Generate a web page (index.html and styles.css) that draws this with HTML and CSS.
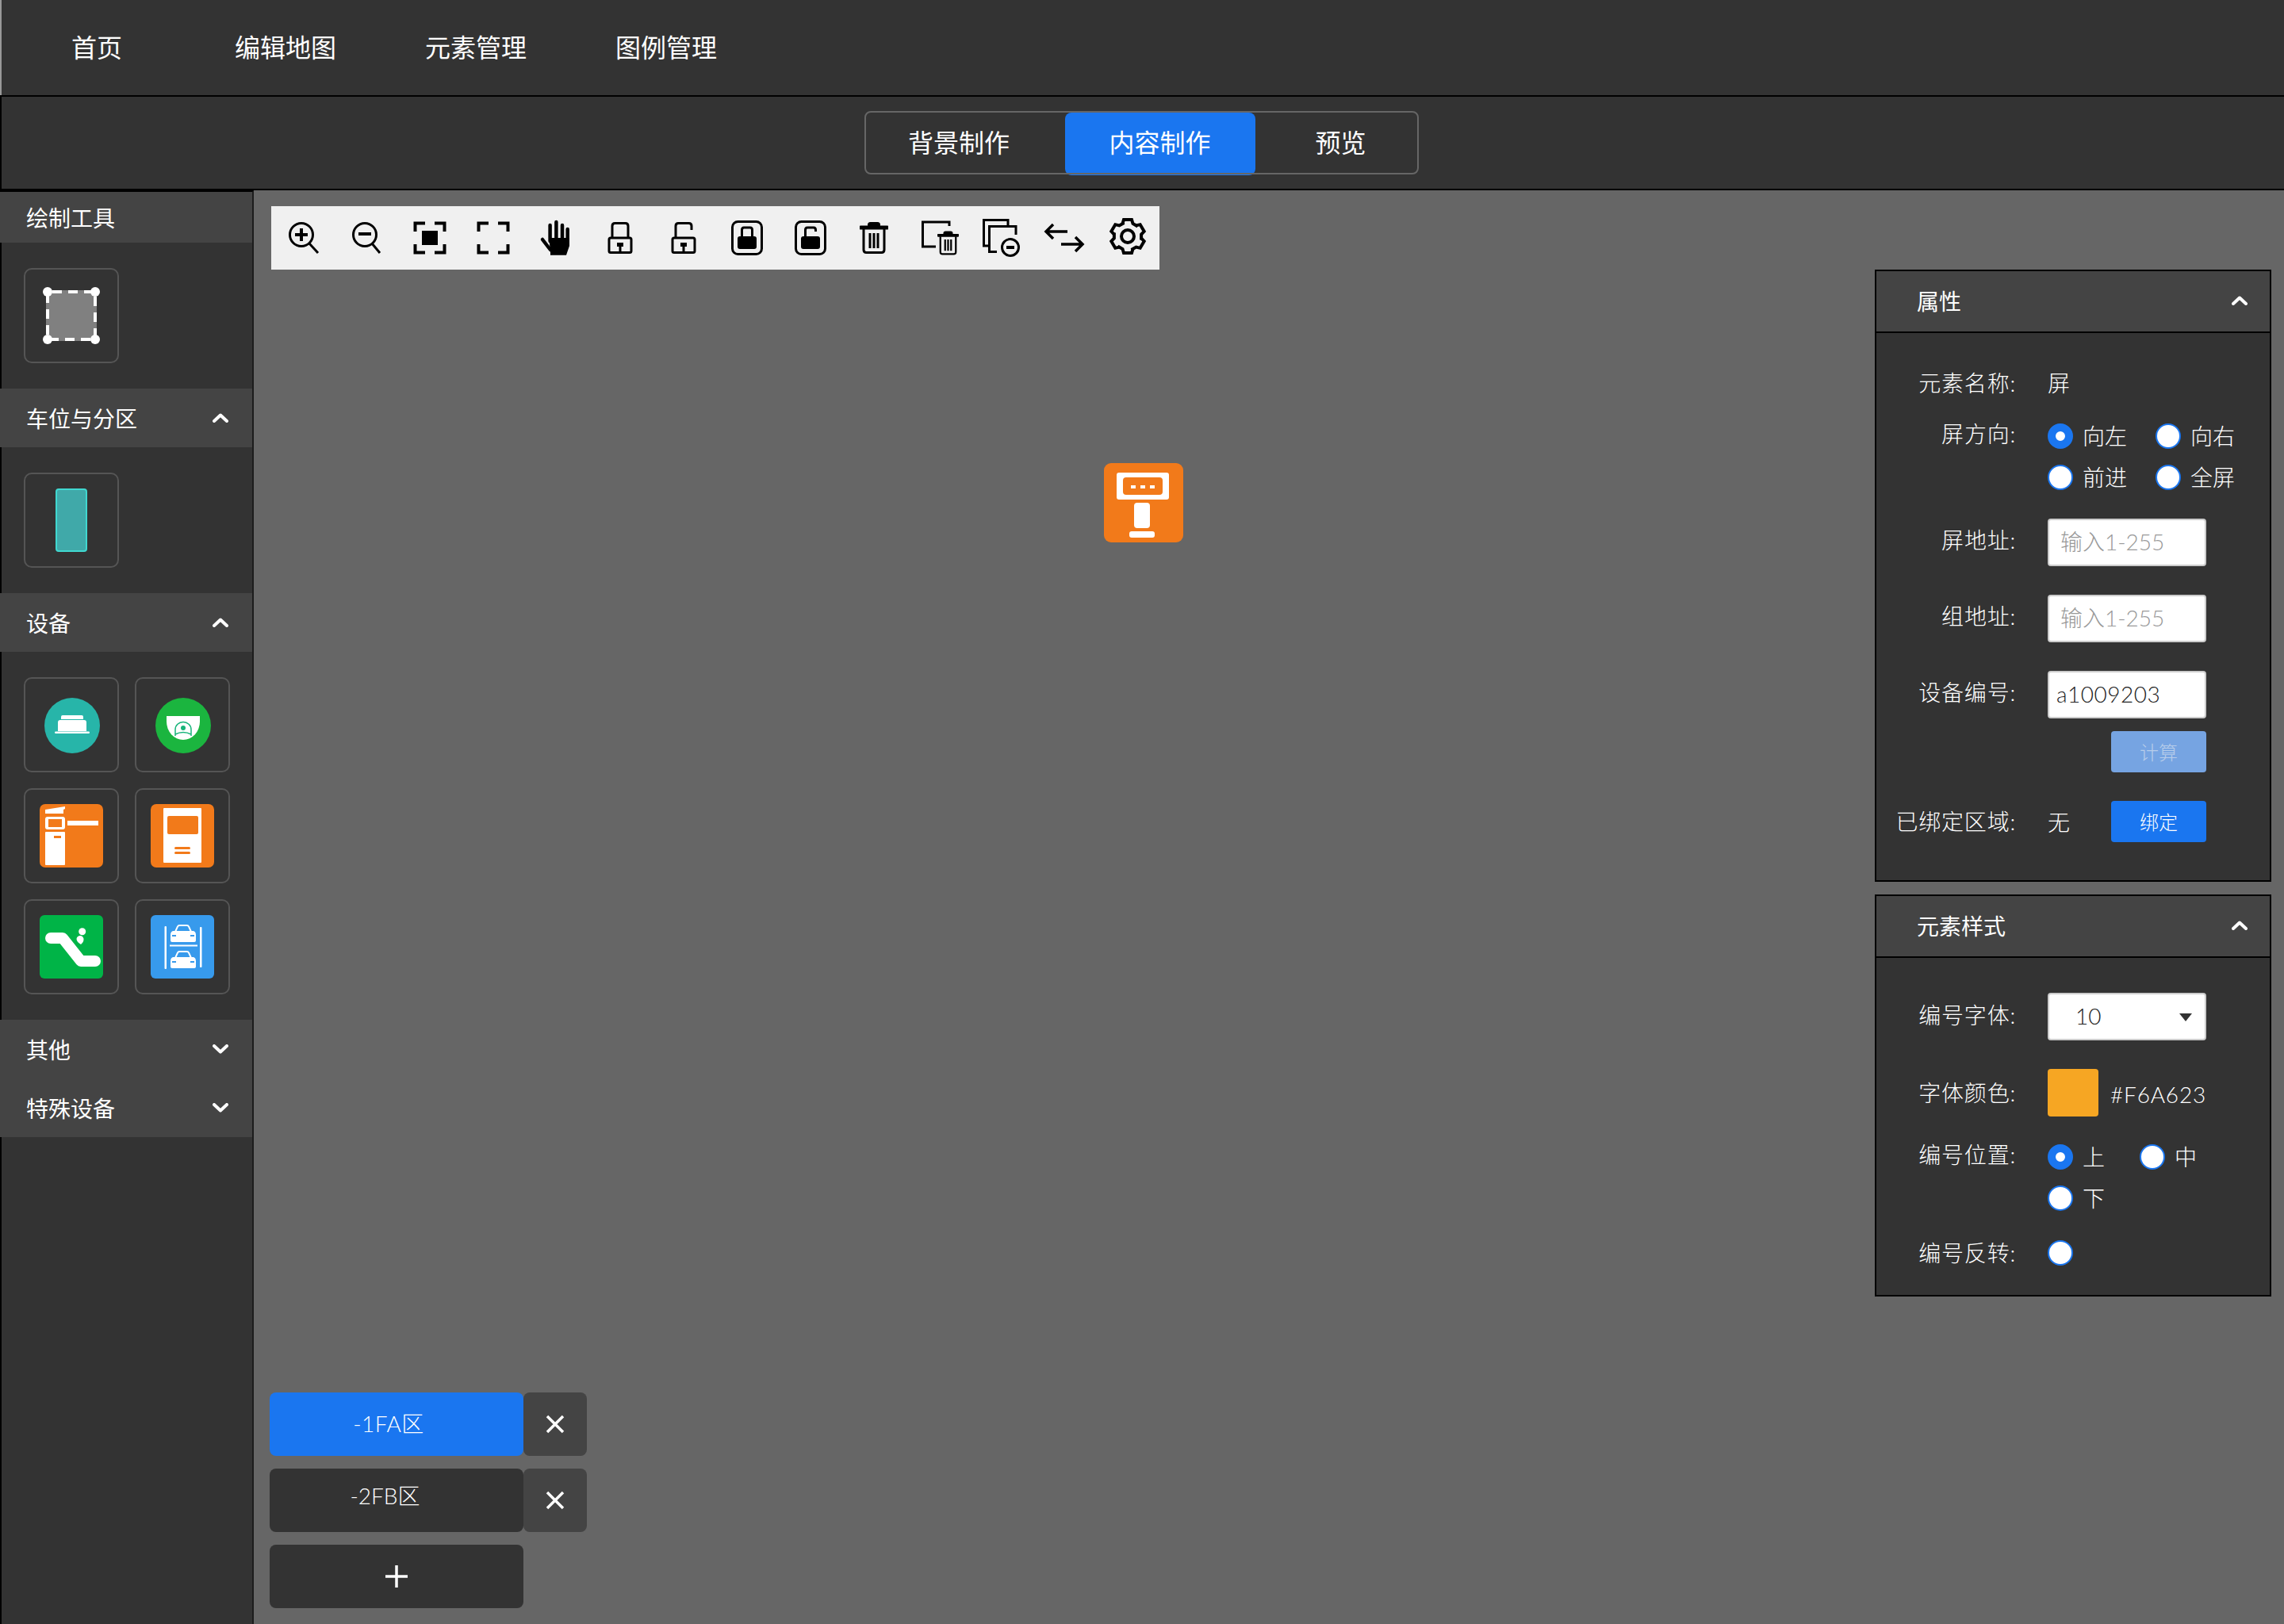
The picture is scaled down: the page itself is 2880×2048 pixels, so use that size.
FILE: index.html
```html
<!DOCTYPE html>
<html lang="zh-CN">
<head>
  <meta charset="UTF-8" />
  <title>编辑地图 - 内容制作</title>
  <link rel="stylesheet" href="styles.css">
</head>
<body>

  <svg class="sprite" xmlns="http://www.w3.org/2000/svg">
    <symbol id="chev-up" viewBox="0 0 20 12">
      <path d="M2 10 10 2.5 18 10" fill="none" stroke="#fff" stroke-width="4" stroke-linecap="round" stroke-linejoin="round"/>
    </symbol>
    <symbol id="chev-down" viewBox="0 0 20 12">
      <path d="M2 2 10 9.5 18 2" fill="none" stroke="#fff" stroke-width="4" stroke-linecap="round" stroke-linejoin="round"/>
    </symbol>
    <symbol id="trash" viewBox="0 0 36 40">
      <rect x="10" y="0" width="16" height="7" rx="3.5"/>
      <path d="M1.5 7H34.5" fill="none" stroke="#000" stroke-width="5" stroke-linecap="round"/>
      <path d="M5 9V35Q5 38.5 8.5 38.5H27.5Q31 38.5 31 35V9M13 14V33M18 14V33M23 14V33" fill="none" stroke="#000" stroke-width="3"/>
    </symbol>
    <symbol id="car" viewBox="0 0 32 22">
      <path d="M6 9 9 2.5Q9.5 1 11.5 1H20.500Q22.500 1 23 2.500L26 9" fill="none" stroke="#fff" stroke-width="2"/>
      <path d="M3 8H29Q32 9 32 13V20Q32 22 30 22H2Q0 22 0 20V13Q0 9 3 8Z" fill="#fff"/>
      <path d="M2 13H7V15H2ZM25 13H30V15H25Z" fill="#379aec"/>
    </symbol>
  </svg>

  <nav class="topnav">
    <a class="topnav-item topnav-home">首页</a>
    <a class="topnav-item">编辑地图</a>
    <a class="topnav-item">元素管理</a>
    <a class="topnav-item">图例管理</a>
  </nav>

  <div class="modebar">
    <div class="mode-tabs">
      <div class="mode-tab mode-tab-first">背景制作</div>
      <div class="mode-tab mode-tab-active">内容制作</div>
      <div class="mode-tab mode-tab-last">预览</div>
    </div>
  </div>

  <div class="workspace">
    <aside class="sidebar">
      <div class="side-head side-head-short">绘制工具</div>
      <div class="side-grid">
        <div class="side-item">
          <svg class="side-icon" viewBox="0 0 80 80">
            <rect x="8" y="8" width="64" height="64" fill="#808080"/>
            <rect x="10" y="10" width="60" height="60" fill="none" stroke="#fff" stroke-width="4" stroke-dasharray="12 8" stroke-dashoffset="-6"/>
            <circle cx="10" cy="10" r="6" fill="#fff"/>
            <circle cx="70" cy="10" r="6" fill="#fff"/>
            <circle cx="10" cy="70" r="6" fill="#fff"/>
            <circle cx="70" cy="70" r="6" fill="#fff"/>
          </svg>
        </div>
      </div>

      <div class="side-head">车位与分区<svg class="chevron"><use href="#chev-up"/></svg></div>
      <div class="side-grid">
        <div class="side-item"><div class="zone-swatch"></div></div>
      </div>

      <div class="side-head">设备<svg class="chevron"><use href="#chev-up"/></svg></div>
      <div class="side-grid">
        <div class="side-item">
          <svg class="side-icon" viewBox="0 0 80 80">
            <circle cx="41" cy="41" r="35" fill="#27b5a9"/>
            <path d="M27 33V30Q27 28 29 28H53Q55 28 55 30V33ZM23 48V37Q23 34 26 34H56Q59 34 59 37V48Z" fill="#fff"/>
            <rect x="19" y="48.500" width="44" height="2.500" rx="1.200" fill="#fff"/>
          </svg>
        </div>
        <div class="side-item">
          <svg class="side-icon" viewBox="0 0 80 80">
            <circle cx="41" cy="41" r="35" fill="#1bb53f"/>
            <path d="M20 29H62V36A21 23 0 0 1 20 36Z" fill="#fff"/>
            <path d="M31 54V46A10 9.500 0 0 1 51 46V54M31 52Q41 47 51 52" fill="none" stroke="#17b47a" stroke-width="1.500"/>
            <circle cx="41" cy="44" r="3" fill="#17b47a"/>
          </svg>
        </div>
        <div class="side-item">
          <svg class="side-icon" viewBox="0 0 80 80">
            <rect width="80" height="80" rx="7" fill="#f27a1a"/>
            <path d="M7 7 32 3V6L30 7V12H7Z" fill="#fff"/>
            <rect x="7" y="16" width="25" height="16" rx="3" fill="#fff"/>
            <rect x="11" y="19" width="17" height="10" fill="#f27a1a"/>
            <rect x="35" y="21" width="39" height="6" fill="#fff"/>
            <rect x="7" y="35" width="25" height="42" rx="1" fill="#fff"/>
            <rect x="18" y="40" width="9" height="3" fill="#f27a1a"/>
          </svg>
        </div>
        <div class="side-item">
          <svg class="side-icon" viewBox="0 0 80 80">
            <rect width="80" height="80" rx="7" fill="#f27a1a"/>
            <rect x="16" y="5" width="48" height="69" rx="1" fill="#fff"/>
            <rect x="21" y="15" width="39" height="23" rx="2" fill="#f27a1a"/>
            <rect x="30" y="54" width="20" height="3" rx="1.500" fill="#f27a1a"/>
            <rect x="30" y="60" width="20" height="3" rx="1.500" fill="#f27a1a"/>
          </svg>
        </div>
        <div class="side-item">
          <svg class="side-icon" viewBox="0 0 80 80">
            <rect width="80" height="80" rx="6" fill="#00b447"/>
            <path d="M14 29H29L52 58H70" fill="none" stroke="#fff" stroke-width="14" stroke-linecap="round" stroke-linejoin="round"/>
            <circle cx="53.700" cy="20.700" r="4.500" fill="#fff"/>
            <path d="M46.500 30A4.500 4.500 0 0 1 55.500 31C55.500 34 53 36 52 37 49 35 46.500 33 46.500 30Z" fill="#fff"/>
          </svg>
        </div>
        <div class="side-item">
          <svg class="side-icon" viewBox="0 0 80 80">
            <rect width="80" height="80" rx="6" fill="#379aec"/>
            <rect x="17.500" y="14" width="2.500" height="54" rx="1" fill="#fff"/>
            <rect x="62" y="15" width="2.500" height="51" rx="1" fill="#fff"/>
            <rect x="24" y="37.500" width="35" height="2" fill="#fff"/>
            <use href="#car" x="25" y="12" width="32" height="22"/>
            <use href="#car" x="25" y="45" width="32" height="22"/>
          </svg>
        </div>
      </div>

      <div class="side-head">其他<svg class="chevron"><use href="#chev-down"/></svg></div>
      <div class="side-head">特殊设备<svg class="chevron"><use href="#chev-down"/></svg></div>
    </aside>

    <main class="canvas">
      <div class="toolbar">
        <svg class="tool" viewBox="0 0 40 40"><circle cx="18" cy="16" r="14.500" class="ln"/><path d="M28 27 39 39" class="ln"/><path d="M10 16H26M18 8V24" class="ln ln-4"/></svg>
        <svg class="tool" viewBox="0 0 40 40"><circle cx="18" cy="16" r="14.500" class="ln"/><path d="M27 27 37 39" class="ln"/><path d="M10 15H26" class="ln ln-4"/></svg>
        <svg class="tool" viewBox="0 0 40 40"><path d="M14 1.500H1.500V12M26 1.500H38.500V12M14 38.500H1.500V28M26 38.500H38.500V28" class="ln ln-4"/><rect x="10" y="11" width="20" height="18"/></svg>
        <svg class="tool" viewBox="0 0 40 40"><path d="M14 1.500H1.500V12M26 1.500H38.500V12M14 38.500H1.500V28M26 38.500H38.500V28" class="ln ln-4"/></svg>
        <svg class="tool" viewBox="0 0 40 40"><path d="M11.600 4V24M19.400 0V22M27 4V22M33.700 9V26M2 22 12 35" class="ln ln-hand"/><path d="M10 20H36V30L32 41.700H12V36Z"/></svg>
        <svg class="tool" viewBox="0 0 40 40"><path d="M10 20V5Q10 1.500 13.500 1.500H26.500Q30 1.500 30 5V20" class="ln"/><rect x="6" y="20" width="28" height="18.500" rx="2" class="ln"/><path d="M16 26H24V31H21.500V37H18.500V31H16Z"/></svg>
        <svg class="tool" viewBox="0 0 40 40"><path d="M10 20V5Q10 1.500 13.500 1.500H26.500Q30 1.500 30 5V10" class="ln"/><rect x="6" y="20" width="28" height="18.500" rx="2" class="ln"/><path d="M16 26H24V31H21.500V37H18.500V31H16Z"/></svg>
        <svg class="tool" viewBox="0 0 40 40"><rect x="1.500" y="-0.500" width="37" height="41" rx="7" class="ln"/><path d="M13.500 19V10Q13.500 7 16 7H24Q26.500 7 26.500 10V19" class="ln"/><rect x="8" y="18" width="24" height="16" rx="3"/></svg>
        <svg class="tool" viewBox="0 0 40 40"><rect x="1.500" y="-0.500" width="37" height="41" rx="7" class="ln"/><path d="M13.500 19V10Q13.500 7 16 7H24Q26.500 7 26.500 10V12" class="ln"/><rect x="8" y="18" width="24" height="16" rx="3"/></svg>
        <svg class="tool" viewBox="0 0 40 40"><use href="#trash" x="2" y="0" width="36" height="40"/></svg>
        <svg class="tool" viewBox="0 0 40 40"><path d="M35 5V0H1.500V31H18" class="ln"/><use href="#trash" x="20" y="11" width="27" height="31"/></svg>
        <svg class="tool" viewBox="0 0 40 40"><path d="M29 5V-2.500H-1.500V30H4" class="ln"/><path d="M39 16V5.500H5.500V37.500H15" class="ln"/><circle cx="32" cy="32" r="10.500" class="ln ln-bg"/><path d="M27 32H37" class="ln ln-4"/></svg>
        <svg class="tool" viewBox="0 0 40 40"><path d="M24 12H-2M6 3-3 12 6 21" class="ln ln-35"/><path d="M16 28H41M34 19 43 28 34 37" class="ln ln-35"/></svg>
        <svg class="tool" viewBox="-20 -18 40 40">
          <circle r="8" class="ln ln-4"/>
          <g class="ln ln-4">
            <path id="gear-tooth" d="M-6.500-16-5-21H5L6.500-16 12.500-12.500"/>
            <use href="#gear-tooth" transform="rotate(60)"/>
            <use href="#gear-tooth" transform="rotate(120)"/>
            <use href="#gear-tooth" transform="rotate(180)"/>
            <use href="#gear-tooth" transform="rotate(240)"/>
            <use href="#gear-tooth" transform="rotate(300)"/>
          </g>
        </svg>
      </div>

      <!-- element dropped on the map -->
      <svg class="map-node" viewBox="0 0 100 100">
        <rect width="100" height="100" rx="9" fill="#f27a1a"/>
        <rect x="16" y="12" width="66" height="34" rx="3" fill="#fff"/>
        <rect x="24" y="18" width="50" height="22" rx="4" fill="#f27a1a"/>
        <path d="M34 28H40V32H34ZM46 28H52V32H46ZM58 28H64V32H58Z" fill="#fff"/>
        <rect x="38" y="50" width="20" height="32" rx="4" fill="#fff"/>
        <rect x="32" y="86" width="32" height="8" rx="3" fill="#fff"/>
      </svg>

      <div class="floors">
        <div class="floor floor-active">-1FA区</div>
        <div class="floor-del"><svg class="cross" viewBox="0 0 24 24"><path d="M2 2 22 22M22 2 2 22"/></svg></div>
        <div class="floor floor-second">-2FB区</div>
        <div class="floor-del"><svg class="cross" viewBox="0 0 24 24"><path d="M2 2 22 22M22 2 2 22"/></svg></div>
        <div class="floor"><svg class="cross" viewBox="0 0 28 28"><path d="M14 0V28M0 14H28"/></svg></div>
      </div>

      <div class="panels">
        <section class="panel">
          <header class="panel-head">属性<svg class="chevron"><use href="#chev-up"/></svg></header>
          <div class="panel-body panel-body-attr">
            <div class="row row-text"><span class="row-label">元素名称:</span><span class="row-value">屏</span></div>
            <div class="row row-radios">
              <span class="row-label">屏方向:</span>
              <div class="radios">
                <label class="radio"><input type="radio" name="dir" checked>向左</label>
                <label class="radio"><input type="radio" name="dir">向右</label>
                <label class="radio"><input type="radio" name="dir">前进</label>
                <label class="radio"><input type="radio" name="dir">全屏</label>
              </div>
            </div>
            <div class="row row-field"><span class="row-label">屏地址:</span><input class="field" placeholder="输入1-255"></div>
            <div class="row row-field"><span class="row-label">组地址:</span><input class="field" placeholder="输入1-255"></div>
            <div class="row row-field"><span class="row-label">设备编号:</span><input class="field field-value" value="a1009203"></div>
            <div class="row row-calc"><button class="btn btn-off">计算</button></div>
            <div class="row row-bound"><span class="row-label">已绑定区域:</span><span class="row-value">无</span><button class="btn">绑定</button></div>
          </div>
        </section>

        <section class="panel">
          <header class="panel-head">元素样式<svg class="chevron"><use href="#chev-up"/></svg></header>
          <div class="panel-body panel-body-style">
            <div class="row row-select"><span class="row-label">编号字体:</span><div class="select">10<span class="select-arrow"></span></div></div>
            <div class="row row-color"><span class="row-label">字体颜色:</span><span class="swatch"></span><span class="color-code">#F6A623</span></div>
            <div class="row row-radios row-pos">
              <span class="row-label">编号位置:</span>
              <div class="radios radios-narrow">
                <label class="radio"><input type="radio" name="pos" checked>上</label>
                <label class="radio"><input type="radio" name="pos">中</label>
                <label class="radio"><input type="radio" name="pos">下</label>
              </div>
            </div>
            <div class="row row-flip"><span class="row-label">编号反转:</span><label class="radio"><input type="radio" name="flip"></label></div>
          </div>
        </section>
      </div>
    </main>
  </div>

</body>
</html>
```

FILE: styles.css
```css
* {
  box-sizing: border-box;
}

html, body {
  height: 100%;
}

body {
  margin: 0;
  display: flex;
  flex-direction: column;
  height: 100vh;
  overflow: hidden;
  background-color: #666;
  color: #fff;
  font-family: "Lato", "Noto Sans CJK SC", sans-serif;
  font-size: 28px;
  font-weight: 300;
}

.sprite {
  display: none;
}

svg {
  overflow: visible;
  flex: none;
}

/* top bars */
.topnav {
  display: flex;
  height: 122px;
  padding-left: 2px;
  background-color: #333;
  border-bottom: 2px solid #000;
  box-shadow: inset 2px 0 0 #999;
  font-weight: 400;
}

.topnav-item {
  width: 240px;
  line-height: 120px;
  text-align: center;
  font-size: 32px;
}

.topnav-home {
  width: 238px;
  padding-left: 2px;
}

.modebar {
  display: flex;
  justify-content: center;
  height: 118px;
  padding: 18px 4px 0 0;
  background-color: #333;
  border-bottom: 2px solid #000;
  border-left: 2px solid #000;
  font-weight: 400;
}

.mode-tabs {
  position: relative;
  display: flex;
  height: 80px;
  padding: 2px;
  font-size: 32px;
}

.mode-tabs::after {
  content: "";
  position: absolute;
  inset: 0;
  border: 2px solid #666;
  border-radius: 8px;
}

.mode-tab {
  line-height: 76px;
  text-align: center;
}

.mode-tab-first {
  width: 251px;
  padding-right: 16px;
}

.mode-tab-active {
  width: 240px;
  height: 79px;
  border-radius: 8px;
  background-color: #1a76f0;
}

.mode-tab-last {
  width: 204px;
  padding-left: 12px;
}

/* left column */
.workspace {
  flex: 1;
  display: flex;
  min-height: 0;
}

.sidebar {
  width: 320px;
  flex: none;
  background-color: #333;
  border-top: 2px solid #000;
  border-right: 2px solid #1c1c1c;
  box-shadow: inset 2px 0 0 #000;
}

.side-head {
  display: flex;
  align-items: center;
  justify-content: space-between;
  height: 74px;
  padding: 0 30px 0 33px;
  background-color: #444;
  font-weight: 400;
}

.side-head-short {
  height: 64px;
}

.chevron {
  width: 20px;
  height: 12px;
}

.side-grid {
  display: grid;
  grid-template-columns: 120px 120px;
  gap: 20px;
  padding: 32px 30px;
}

.side-item {
  display: flex;
  align-items: center;
  justify-content: center;
  width: 120px;
  height: 120px;
  border: 2px solid #555;
  border-radius: 10px;
}

.side-icon {
  width: 80px;
  height: 80px;
}

.zone-swatch {
  width: 40px;
  height: 80px;
  background-color: #40a9a9;
  border: 2px solid #40d8d0;
  border-radius: 4px;
}

/* map area */
.canvas {
  position: relative;
  flex: 1;
  background-color: #666;
}

.toolbar {
  display: flex;
  gap: 40px;
  width: 1120px;
  height: 80px;
  margin: 20px 0 0 22px;
  padding: 20px;
  background-color: #f0f0f0;
}

.tool {
  width: 40px;
  height: 40px;
}

.ln {
  fill: none;
  stroke: #000;
  stroke-width: 3;
}

.ln-4 {
  stroke-width: 4;
}

.ln-35 {
  stroke-width: 3.5;
}

.ln-hand {
  stroke-width: 4.5;
  stroke-linecap: round;
}

.ln-bg {
  fill: #f0f0f0;
}

.map-node {
  position: absolute;
  left: 1072px;
  top: 344px;
  width: 100px;
  height: 100px;
}

/* floor switcher */
.floors {
  position: absolute;
  left: 20px;
  bottom: 20px;
  display: grid;
  grid-template-columns: 320px 80px;
  row-gap: 16px;
}

.floor {
  display: flex;
  align-items: center;
  justify-content: center;
  height: 80px;
  border-radius: 8px;
  background-color: #333;
}

.floor-active {
  padding: 0 20px 4px 0;
  background-color: #1a76f0;
  letter-spacing: 0.5px;
}

.floor-second {
  padding: 0 29px 14px 0;
}

.floor-del {
  display: flex;
  align-items: center;
  justify-content: center;
  height: 80px;
  border-radius: 8px;
  background-color: #444;
}

.cross {
  fill: none;
  stroke: #fff;
  stroke-width: 3.5;
}

.floor-del .cross {
  width: 24px;
  height: 24px;
}

.floor .cross {
  width: 28px;
  height: 28px;
}

/* right panels */
.panels {
  position: absolute;
  top: 100px;
  right: 16px;
  display: flex;
  flex-direction: column;
  gap: 16px;
  width: 500px;
}

.panel {
  background-color: #333;
  border: 2px solid #000;
}

.panel-head {
  display: flex;
  align-items: center;
  justify-content: space-between;
  height: 78px;
  padding: 0 28px 2px 51px;
  background-color: #444;
  border-bottom: 2px solid #000;
  font-weight: 400;
}

.panel-body-attr {
  padding: 40px 0 48px;
}

.panel-body-style {
  padding: 44px 0 26px;
}

.row {
  display: flex;
  align-items: flex-start;
}

.row-label {
  flex: none;
  width: 176px;
  margin-right: 40px;
  line-height: 54px;
  letter-spacing: 0.8px;
  text-align: right;
}

.row-text {
  height: 46px;
  align-items: center;
}

.row-text .row-value {
  margin-bottom: 2px;
}

.row-radios {
  margin-top: 18px;
}

.row-radios .row-label {
  line-height: 46px;
}

.row-field {
  margin-top: 26px;
}

.row-field + .row-field {
  margin-top: 36px;
}

.row-calc {
  justify-content: flex-end;
  margin-top: 16px;
  padding-right: 80px;
}

.row-bound {
  align-items: center;
  margin-top: 36px;
}

.row-bound .row-label {
  line-height: 52px;
}

.row-bound .btn {
  margin-left: 52px;
}

.radios {
  display: grid;
  grid-template-columns: 136px 136px;
}

.radios-narrow {
  grid-template-columns: 116px 116px;
}

.radio {
  display: flex;
  align-items: center;
  gap: 12px;
  height: 52px;
  padding-bottom: 2px;
}

.radio input {
  appearance: none;
  flex: none;
  width: 32px;
  height: 32px;
  margin: 2px 0 0;
  border: 2px solid #1a76f0;
  border-radius: 50%;
  background-color: #fff;
}

.radio input:checked {
  border: 10px solid #1a76f0;
}

.field {
  width: 200px;
  height: 60px;
  padding: 0 10px 2px 14px;
  border: 2px solid #ccc;
  border-radius: 4px;
  background-color: #fff;
  color: #222;
  font: inherit;
  outline: none;
}

.field::placeholder {
  color: #999;
  opacity: 1;
}

.field-value {
  padding-left: 9px;
  letter-spacing: 0.5px;
}

.btn {
  width: 120px;
  height: 52px;
  padding: 0 0 2px;
  border: none;
  border-radius: 4px;
  background-color: #1a76f0;
  color: #fff;
  font: inherit;
  font-size: 24px;
}

.btn-off {
  background-color: #76a4e2;
  color: #b8cdea;
}

.row-select .row-label {
  line-height: 56px;
}

.select {
  position: relative;
  width: 200px;
  height: 60px;
  padding-left: 33px;
  border: 2px solid #ccc;
  border-radius: 4px;
  background-color: #fff;
  color: #222;
  line-height: 54px;
}

.select-arrow {
  position: absolute;
  right: 16px;
  top: 24px;
  border-left: 8px solid transparent;
  border-right: 8px solid transparent;
  border-top: 10px solid #333;
}

.row-color {
  align-items: center;
  margin-top: 36px;
}

.swatch {
  width: 64px;
  height: 60px;
  border-radius: 4px;
  background-color: #f6a623;
}

.color-code {
  margin: 4px 0 0 15px;
  letter-spacing: 0.8px;
}

.row-pos {
  margin-top: 25px;
}

.row-flip {
  align-items: center;
  margin-top: 16px;
}
```
